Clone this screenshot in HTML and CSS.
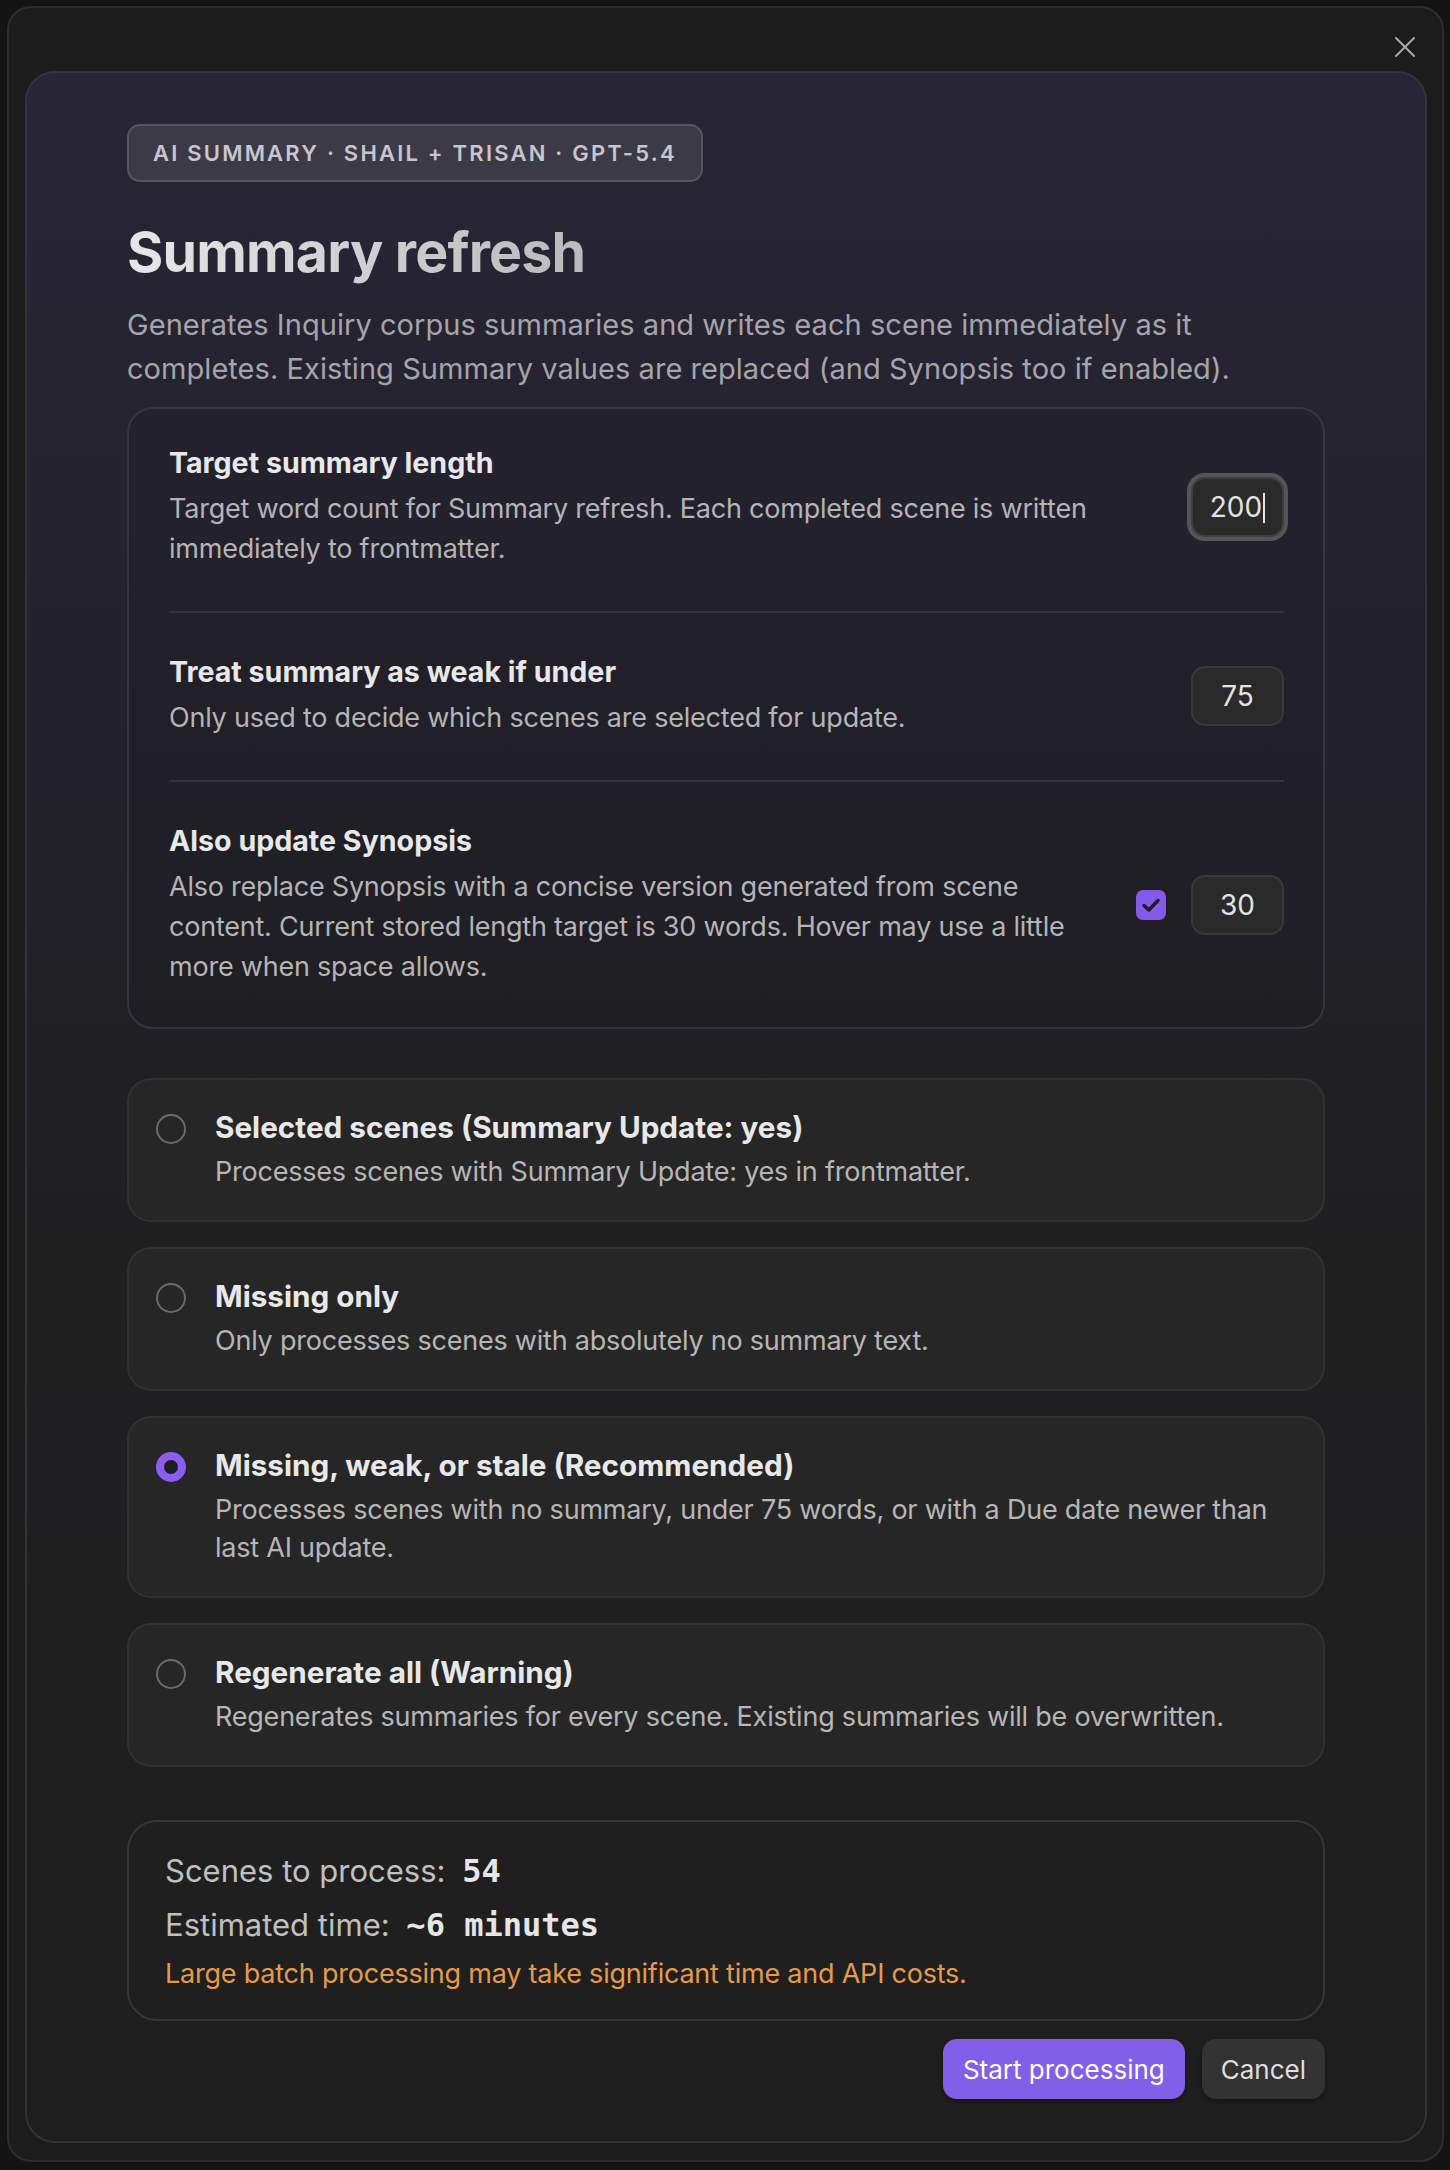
FILE: index.html
```html
<html>

<head>
	<title>Summary refresh</title>
	<link rel="stylesheet" href="styles.css">
</head>

<body>
	<div class="modal">
		<button class="modal-close" type="button" aria-label="Close">
			<svg viewBox="0 0 24 24" width="24" height="24"><path d="M3 3 L21 21 M21 3 L3 21" /></svg>
		</button>
		<div class="panel">
			<div class="badge">AI SUMMARY · SHAIL + TRISAN · GPT-5.4</div>
			<h1 class="title">Summary refresh</h1>
			<p class="lead">Generates Inquiry corpus summaries and writes each scene immediately as it completes. Existing Summary values are replaced (and Synopsis too if enabled).</p>

			<div class="settings">
				<div class="setting">
					<div class="setting-info">
						<div class="setting-name">Target summary length</div>
						<div class="setting-desc">Target word count for Summary refresh. Each completed scene is written immediately to frontmatter.</div>
					</div>
					<div class="setting-control">
						<div class="num num-focus">200<span class="caret"></span></div>
					</div>
				</div>
				<div class="setting">
					<div class="setting-info">
						<div class="setting-name">Treat summary as weak if under</div>
						<div class="setting-desc">Only used to decide which scenes are selected for update.</div>
					</div>
					<div class="setting-control">
						<div class="num">75</div>
					</div>
				</div>
				<div class="setting">
					<div class="setting-info">
						<div class="setting-name">Also update Synopsis</div>
						<div class="setting-desc">Also replace Synopsis with a concise version generated from scene content. Current stored length target is 30 words. Hover may use a little more when space allows.</div>
					</div>
					<div class="setting-control">
						<span class="check">
							<svg viewBox="0 0 30 30" width="30" height="30"><path d="M8 15.5 L12.8 20 L22 10.5" /></svg>
						</span>
						<div class="num">30</div>
					</div>
				</div>
			</div>

			<div class="options">
				<div class="option">
					<span class="radio"></span>
					<div class="option-text">
						<div class="option-name">Selected scenes (Summary Update: yes)</div>
						<div class="option-desc">Processes scenes with Summary Update: yes in frontmatter.</div>
					</div>
				</div>
				<div class="option">
					<span class="radio"></span>
					<div class="option-text">
						<div class="option-name">Missing only</div>
						<div class="option-desc">Only processes scenes with absolutely no summary text.</div>
					</div>
				</div>
				<div class="option">
					<span class="radio is-on"></span>
					<div class="option-text">
						<div class="option-name">Missing, weak, or stale (Recommended)</div>
						<div class="option-desc">Processes scenes with no summary, under 75 words, or with a Due date newer than last AI update.</div>
					</div>
				</div>
				<div class="option">
					<span class="radio"></span>
					<div class="option-text">
						<div class="option-name">Regenerate all (Warning)</div>
						<div class="option-desc">Regenerates summaries for every scene. Existing summaries will be overwritten.</div>
					</div>
				</div>
			</div>

			<div class="stats">
				<div class="stat">Scenes to process: <code>54</code></div>
				<div class="stat">Estimated time: <code>~6 minutes</code></div>
				<div class="warn">Large batch processing may take significant time and API costs.</div>
			</div>

			<div class="actions">
				<button class="btn btn-primary" type="button">Start processing</button>
				<button class="btn" type="button">Cancel</button>
			</div>
		</div>
	</div>
</body>

</html>
```

FILE: styles.css
```css
body { margin: 0; background: #141414; font-family: "Inter", "Noto Sans", sans-serif; color: #dcdcdc; }
* { box-sizing: border-box; }

.modal { position: relative; width: 1437px; margin: 6px 0 0 7px; padding: 63px 15px 17px 16px; background: #1c1c1c; border: 2px solid #2e2e2e; border-radius: 24px; }
.modal-close { position: absolute; top: 27px; right: 25px; width: 24px; height: 24px; padding: 0; border: 0; background: none; }
.modal-close svg { display: block; }
.modal-close path { stroke: #a8a8a8; stroke-width: 2; fill: none; stroke-linecap: round; }

.panel { padding: 51px 100px 42px 100px; border: 2px solid #34333b; border-radius: 30px; background: linear-gradient(180deg, #282536 0%, #23222b 30%, #1f1f21 55%, #1e1e1e 100%); }

.badge { display: inline-block; height: 58px; padding: 0 24px; line-height: 54px; font-size: 22px; font-weight: 600; letter-spacing: 2.2px; color: #c6c6cb; background: #3c3a47; border: 2px solid #56545f; border-radius: 13px; }
.title { width: fit-content; margin: 37px 0 0; font-size: 55.5px; line-height: 66px; font-weight: 700; letter-spacing: -0.015em; background: linear-gradient(90deg, #e6e6e6, #bababa); -webkit-background-clip: text; color: transparent; }
.lead { margin: 18px 0 0; font-size: 29px; line-height: 43.5px; letter-spacing: 0.05px; color: #a5a4ab; }

.settings { margin-top: 17px; padding: 0 39px 0 40px; border: 2px solid #36353d; border-radius: 26px; background: rgba(0, 0, 0, 0.04); }
.setting { display: flex; align-items: center; padding: 41px 0 42px; border-top: 2px solid #34333a; }
.setting:first-child { padding-top: 36px; border-top: 0; }
.setting:last-child { padding-bottom: 40px; }
.setting-info { flex: 0 1 auto; max-width: 940px; }
.setting-name { font-size: 28.6px; line-height: 36px; font-weight: 700; color: #e8e8e8; }
.setting-desc { margin-top: 8px; font-size: 27px; line-height: 40px; letter-spacing: -0.22px; color: #b4b4b6; }
.setting-control { display: flex; align-items: center; gap: 25px; margin-left: auto; }

.num { width: 93px; height: 60px; line-height: 56px; text-align: center; font-size: 28px; color: #e2e2e2; background: #2a2a2b; border: 2px solid #393939; border-radius: 14px; }
.num-focus { border-color: #3e3e3e; box-shadow: 0 0 0 4px #555; }
.caret { display: inline-block; width: 2px; height: 30px; margin-left: 1px; vertical-align: -6px; background: #e6e6e6; }

.check { display: block; width: 30px; height: 30px; border-radius: 7px; background: #835ae9; }
.check svg { display: block; }
.check path { stroke: #1d1d1f; stroke-width: 3.4; fill: none; stroke-linecap: round; stroke-linejoin: round; }

.options { margin-top: 49px; display: flex; flex-direction: column; gap: 25px; }
.option { display: flex; align-items: flex-start; gap: 29px; padding: 29px 30px 29px 27px; background: #262626; border: 2px solid #313131; border-radius: 24px; }
.radio { flex: none; width: 30px; height: 30px; margin-top: 5px; border: 2px solid #6a6a6a; border-radius: 50%; }
.radio.is-on { border: 8px solid #8a5ef0; background: #1e1e1e; }
.option-name { font-size: 29.7px; line-height: 36px; font-weight: 700; color: #e8e8e8; }
.option-desc { margin-top: 8px; font-size: 27px; line-height: 38px; letter-spacing: -0.22px; color: #b6b6b6; }

.stats { margin-top: 53px; padding: 27px 36px 26px; border: 2px solid #363636; border-radius: 30px; background: #1f1f1f; }
.stat { font-size: 31px; line-height: 44px; color: #c0c0c0; }
.stat + .stat { margin-top: 10px; }
.stat code { margin-left: 8px; font-family: "DejaVu Sans Mono", "Liberation Mono", monospace; font-weight: 700; font-size: 32px; color: #e6e6e6; }
.warn { margin-top: 8px; font-size: 27px; line-height: 38px; letter-spacing: -0.22px; color: #e59a4b; }

.actions { display: flex; justify-content: flex-end; gap: 17px; margin-top: 18px; }
.btn { height: 60px; padding: 0 19px; font-family: inherit; font-size: 26px; color: #dedede; background: #333; border: 0; border-radius: 14px; box-shadow: 0 2px 4px rgba(0, 0, 0, 0.35); }
.btn-primary { padding: 0 20px; color: #fff; background: #825fe8; }
```
